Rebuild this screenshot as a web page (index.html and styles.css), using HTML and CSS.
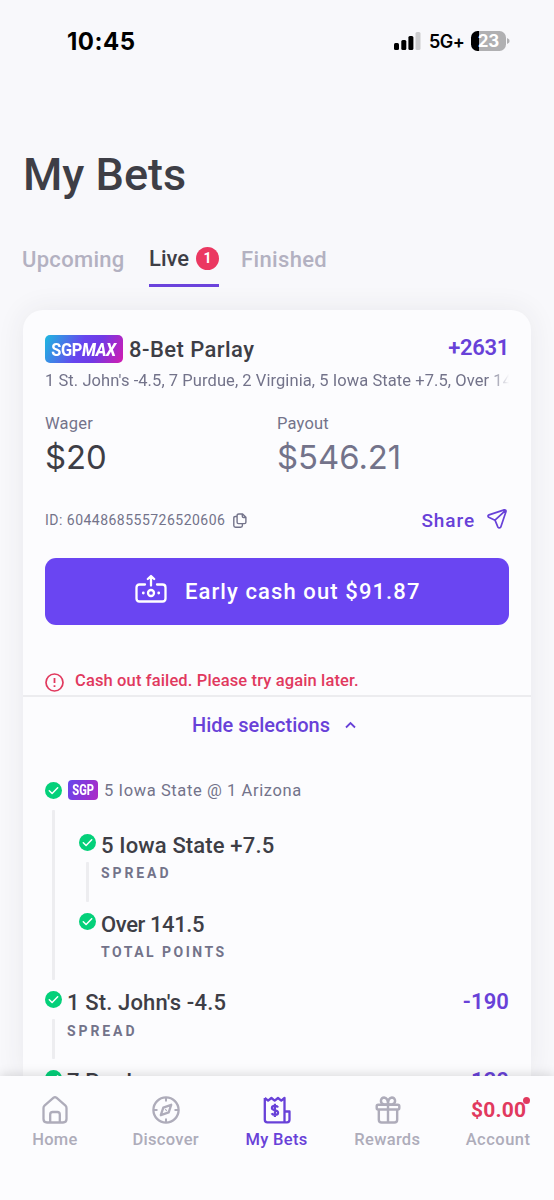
FILE: index.html
```html
<!DOCTYPE html>
<html lang="en">
<head>
<meta charset="utf-8">
<title>My Bets</title>
<link rel="stylesheet" href="styles.css">
</head>
<body>
<svg width="0" height="0" class="defs">
  <symbol id="check" viewBox="0 0 17 17"><circle cx="8.5" cy="8.5" r="8.5" fill="#04d07a"/><path d="M4.3 8.8l2.8 2.7 5.6-5.7" fill="none" stroke="#fff" stroke-width="1.5" stroke-linecap="round" stroke-linejoin="round"/></symbol>
</svg>
<div class="screen">
  <header class="status">
    <span class="clock">10:45</span>
    <span class="status-right">
      <svg class="signal" width="27" height="18" viewBox="0 0 27 18"><rect x="0" y="11" width="5" height="7" rx="1.5"/><rect x="7.3" y="8" width="5" height="10" rx="1.5"/><rect x="14.4" y="4" width="5" height="14" rx="1.5"/><rect x="21.5" y="0" width="5" height="18" rx="1.5" fill="#ccccce"/></svg>
      <span class="network">5G+</span>
      <span class="battery"><span class="level">23</span></span>
      <svg width="3" height="6" viewBox="0 0 3 6"><path d="M0 0Q2.6 1 2.6 3T0 6Z" fill="#b0b0b2"/></svg>
    </span>
  </header>

  <h1 class="title">My Bets</h1>

  <nav class="tabs">
    <span class="tab upcoming">Upcoming</span>
    <span class="tab active"><span class="live">Live</span><span class="count">1</span></span>
    <span class="tab finished">Finished</span>
  </nav>

  <main class="card">
    <section class="summary">
      <div class="head">
        <span class="tag-max"><span>SGP<i>MAX</i></span></span>
        <span class="bet-name">8-Bet Parlay</span>
        <span class="odds">+2631</span>
      </div>
      <div class="legs">1 St. John's -4.5, 7 Purdue, 2 Virginia, 5 Iowa State +7.5, Over 141.5</div>
      <div class="money">
        <div><div class="label">Wager</div><div class="amount">$20</div></div>
        <div class="muted"><div class="label">Payout</div><div class="amount">$546.21</div></div>
      </div>
      <div class="meta">
        <span class="bet-id">ID: 6044868555726520606</span>
        <svg class="copy" width="14" height="15" viewBox="0 0 14 15" fill="none" stroke="#73738a" stroke-width="1.4" stroke-linejoin="round"><path d="M5.8 1h3.8l3.3 3.2v5q0 1.4-1.4 1.4H5.5q-1.4 0-1.4-1.4V2.5Q4.100 1 5.800 1ZM9.300 1v2.200q0 1.300 1.300 1.300h2.300M4 3.500H2.200Q.800 3.500.800 4.900v7.600q0 1.700 1.700 1.700h5.200q1.700 0 1.700-1.700v-1.700"/></svg>
        <span class="share">Share</span>
        <svg class="plane" width="20" height="20" viewBox="0 0 20 20" fill="none" stroke="#6841d8" stroke-width="1.700" stroke-linejoin="round" stroke-linecap="round"><path d="M17.200.900 2 5.900Q.100 6.700 1.700 8.300L8 11.200l2.800 6.700q1.500 2.100 3 0l5.200-15.500Q19.200.600 17.200.900ZM8 11.200 18.600 1.300"/></svg>
      </div>
      <button class="cash">
        <svg width="32" height="30" viewBox="0 0 32 30" fill="none" stroke="#fff" stroke-width="2.300" stroke-linecap="round" stroke-linejoin="round"><path d="M10 10.500H4.500Q1.500 10.500 1.500 13.500v11q0 3 3 3h23q3 0 3-3v-11q0-3-3-3H22M16 11.500V4M12.800 5 16 2l3.200 3"/><circle cx="16" cy="19" r="3"/><path d="M8.300 19h.01M23.700 19h.01" stroke-width="2.800"/></svg>
        <span>Early cash out $91.87</span>
      </button>
      <div class="error">
        <svg width="19" height="19" viewBox="0 0 19 19" fill="none" stroke="#e1395e"><circle cx="9.500" cy="9.500" r="8.500" stroke-width="1.700"/><path d="M9.500 5v5M9.500 12.300v1.700" stroke-width="1.800"/></svg>
        <span>Cash out failed. Please try again later.</span>
      </div>
    </section>
    <section class="selections">
      <div class="toggle"><span>Hide selections</span><svg width="11" height="8" viewBox="0 0 11 8" fill="none" stroke="#6841d8" stroke-width="1.800"><path d="M1 6.500 5.500 2l4.500 4.500"/></svg></div>
      <div class="game">
        <div class="rail"><svg class="check"><use href="#check"/></svg><i class="line"></i></div>
        <div class="game-body">
          <div class="match"><span class="tag"><span>SGP</span></span><span class="match-name">5 Iowa State @ 1 Arizona</span></div>
          <div class="pick nested">
            <div class="rail"><svg class="check"><use href="#check"/></svg><i class="line"></i></div>
            <div><div class="name">5 Iowa State +7.5</div><div class="market">SPREAD</div></div>
          </div>
          <div class="pick nested">
            <div class="rail"><svg class="check"><use href="#check"/></svg></div>
            <div><div class="name over">Over 141.5</div><div class="market total">TOTAL POINTS</div></div>
          </div>
        </div>
      </div>
      <div class="pick">
        <div class="rail"><svg class="check"><use href="#check"/></svg><i class="line"></i></div>
        <div><div class="name">1 St. John's -4.5</div><div class="market">SPREAD</div></div>
        <span class="price">-190</span>
      </div>
      <div class="pick">
        <div class="rail"><svg class="check"><use href="#check"/></svg></div>
        <div><div class="name">7 Purdue</div></div>
        <span class="price last">120</span>
      </div>
    </section>
  </main>

  <nav class="bottom">
    <a class="item home"><svg width="26" height="28" viewBox="0 0 26 28" fill="none" stroke="currentColor" stroke-width="2.300" stroke-linejoin="round"><path d="M11.600 1.700 2.500 9.600Q1.500 10.500 1.500 12v11q0 3.500 3.500 3.500h16q3.500 0 3.500-3.500V12q0-1.500-1-2.400l-9.100-7.900q-1.400-1-2.800 0ZM8.200 26V18.500Q8.200 16 10.700 16h4.600q2.500 0 2.500 2.500V26"/></svg><span>Home</span></a>
    <a class="item discover"><svg width="28" height="28" viewBox="0 0 28 28" fill="none" stroke="currentColor" stroke-width="2.300" stroke-linejoin="round"><circle cx="14" cy="14" r="12.600"/><path d="M14 1.500v4M14 22.500v4M1.500 14h4M22.500 14h4" stroke-width="2"/><path d="m19.200 8.800-2.500 7.600-7.900 2.800 2.500-7.600ZM13.600 14.400l.8-.8"/></svg><span>Discover</span></a>
    <a class="item bets"><svg width="28" height="28" viewBox="0 0 28 28" fill="none" stroke="currentColor" stroke-width="2.300" stroke-linejoin="round"><path d="M1.800 2V23.700q0 2.600 2.600 2.600H24q2.500 0 2.500-2.500V15.500h-5M21.500 26V2L18.300 4.600 15 2 11.700 4.600 8.400 2 5.100 4.600 1.800 2"/><path d="M15 11.500q-.700-1.700-3.200-1.700-2.900 0-2.900 2.200c0 3.200 6.200 1.600 6.200 4.700q0 2.200-3.200 2.200-2.500 0-3.300-1.600M11.900 7.800v13.200" stroke-width="2.200"/></svg><span>My Bets</span></a>
    <a class="item rewards"><svg width="26" height="29" viewBox="0 0 26 29" fill="none" stroke="currentColor" stroke-width="2.500" stroke-linejoin="round"><rect x="1.300" y="9" width="23.400" height="5" rx="1.500"/><path d="M3.500 14v10.500q0 3 3 3h13q3 0 3-3V14M13 9v18.500M13 8.700H8.500Q5.300 7.500 5.700 4.500 6.300 1.500 9 1.500q4 .3 4 7.200Zm0 0h4.500q3.200-1.200 2.800-4.200-.6-3-3.300-3-4 .3-4 7.200Z"/></svg><span>Rewards</span></a>
    <a class="item account"><b class="balance">$0.00<i class="dot"></i></b><span>Account</span></a>
  </nav>
</div>
</body>
</html>
```
FILE: styles.css
```css
* { box-sizing: border-box; }
body { margin: 0; background: #f8f8fb; font-family: Roboto, "Liberation Sans", sans-serif; color: #3e3e46; }
svg { display: block; flex: none; }
.defs { position: absolute; }
.screen { width: 554px; height: 1200px; overflow: hidden; display: flex; flex-direction: column; white-space: nowrap; }

.status { height: 84px; flex: none; padding: 0 44px 2px 67px; display: flex; align-items: center; justify-content: space-between; color: #000; }
.clock { font: 700 24px Inter, sans-serif; letter-spacing: .5px; }
.status-right { display: flex; align-items: center; }
.network { font: 600 18px Inter, sans-serif; margin-left: 8px; width: 42px; letter-spacing: -.5px; }
.battery { width: 35px; height: 20px; border-radius: 6.500px; background: linear-gradient(90deg, #000 8px, #b0b0b2 8px); display: flex; align-items: center; justify-content: center; margin-right: 1px; }
.level { font: 700 17px Inter, sans-serif; color: #fff; }

.title { margin: 61px 0 0 23px; font-size: 45px; line-height: 60px; font-weight: 500; letter-spacing: 0; flex: none; }
.tabs { display: flex; margin: 27px 0 0 22px; height: 55px; flex: none; font-size: 22px; font-weight: 500; line-height: 56px; color: #b3b1c1; }
.upcoming { width: 127px; letter-spacing: .3px; }
.active { display: flex; align-items: center; width: 70px; border-bottom: 3px solid #6b43dc; color: #3e3e46; }
.active .live { width: 47px; padding-top: 2px; }
.finished { margin-left: 22px; letter-spacing: .35px; }
.count { width: 23px; height: 23px; border-radius: 50%; background: #eb3861; color: #fff; font-size: 14px; line-height: 23px; font-weight: 700; text-align: center; }

.card { margin: 23px 23px 0; flex: 1; min-height: 0; overflow: hidden; background: #fcfcfe; border-radius: 20px 20px 0 0; box-shadow: 0 0 28px rgba(50, 50, 70, .08); }
.summary { height: 387px; padding: 22px 22px 0; border-bottom: 2px solid #ececef; }
.head { display: flex; height: 34px; align-items: center; font-size: 22px; font-weight: 500; }
.tag-max { width: 78px; height: 28px; border-radius: 5px; background: linear-gradient(115deg, #20b4e0 2%, #6645ef 45%, #7139e5 65%, #d41bb0 100%); color: #fff; font-size: 19px; line-height: 29px; font-weight: 700; display: flex; justify-content: center; margin-right: 6px; letter-spacing: -.4px; }
.tag-max span { transform: scaleX(.86); }
.tag-max i { font-weight: 800; }
.bet-name { letter-spacing: .45px; }
.odds { margin-left: auto; margin-top: -3px; color: #6841d8; font-weight: 600; letter-spacing: -.3px; }
.legs { margin-top: 2px; height: 26px; line-height: 26px; font-size: 16.500px; letter-spacing: .07px; color: #73738a; overflow: hidden; -webkit-mask: linear-gradient(90deg, #000 445px, transparent 464px); mask: linear-gradient(90deg, #000 445px, transparent 464px); }
.money { display: grid; grid-template-columns: 232px 1fr; margin-top: 16px; }
.label { font-size: 16.500px; line-height: 27px; color: #73738a; letter-spacing: .2px; }
.amount { font: 400 32.800px/40px Inter, sans-serif; }
.muted { color: #73738a; }
.meta { display: flex; align-items: center; height: 26px; margin-top: 30px; color: #73738a; font-size: 14px; }
.bet-id { letter-spacing: .48px; }
.copy { margin-left: 8px; }
.share { margin-left: auto; margin-right: 12px; font-size: 19px; font-weight: 500; letter-spacing: .9px; color: #6841d8; }
.plane { margin-right: 2px; margin-top: -2px; }
.cash { display: flex; align-items: center; gap: 18px; width: 464px; height: 67px; margin-top: 25px; padding: 0 0 0 90px; border: 0; border-radius: 11px; background: #6a45f2; color: #fff; font: 500 22px Roboto, sans-serif; letter-spacing: 1.100px; }
.cash svg { margin-top: -5px; }
.error { display: flex; align-items: center; gap: 11px; margin-top: 42px; height: 26px; color: #e1395e; font-size: 16.500px; font-weight: 500; letter-spacing: .13px; }
.error svg { margin-top: 4px; }

.selections { padding: 12px 22px 0; }
.toggle { display: flex; align-items: center; height: 32px; padding-left: 147px; gap: 15px; color: #6841d8; font-size: 20px; font-weight: 500; }
.game { display: flex; height: 209px; margin-top: 41px; }
.rail { display: flex; flex-direction: column; align-items: center; width: 17px; flex: none; }
.check { width: 17px; height: 17px; }
.line { flex: 1; width: 3px; margin: 11px 0; background: #ededf0; border-radius: 1px; }
.game-body { padding-left: 6px; }
.match { display: flex; align-items: center; height: 16px; font-size: 16.500px; letter-spacing: .6px; color: #73738a; }
.tag { width: 30px; height: 20px; margin-right: 6px; border-radius: 4px; background: linear-gradient(110deg, #6447ed, #ae28c5); color: #fff; font-size: 14.500px; line-height: 21px; font-weight: 800; letter-spacing: 0; display: flex; justify-content: center; }
.tag span { transform: scaleX(.77); }
.pick { display: flex; height: 79px; gap: 5px; }
.pick.nested { margin-left: 11px; }
.match + .nested { margin-top: 36px; }
.name { font-size: 22px; line-height: 24px; font-weight: 500; letter-spacing: .15px; }
.over { letter-spacing: -.4px; }
.market { margin-top: 7px; font-size: 14px; line-height: 18px; font-weight: 700; letter-spacing: 2.900px; color: #73738a; }
.nested .market { margin-top: 6px; }
.market.total { letter-spacing: 2.500px; }
.price { margin-left: auto; margin-top: -2px; line-height: 26px; font-size: 22px; font-weight: 600; letter-spacing: .1px; color: #6841d8; }
.price.last::before { content: "-"; }

.bottom { position: relative; flex: none; height: 124px; display: grid; grid-template-columns: repeat(5, 1fr); background: #fcfcfe; box-shadow: 0 -2px 10px rgba(0, 0, 0, .13); }
.item { display: flex; flex-direction: column; align-items: center; padding-top: 20px; color: #aeacba; font-size: 16.500px; line-height: 22px; font-weight: 500; letter-spacing: .3px; }
.item svg { height: 28px; }
.item > span { margin-top: 5px; margin-right: 1px; }
.bets { color: #6841d8; }
.account { letter-spacing: .5px; }
.balance { position: relative; height: 28px; line-height: 28px; font-size: 21px; letter-spacing: .2px; color: #e1395e; }
.dot { position: absolute; right: -4px; top: 1px; width: 7px; height: 7px; border-radius: 50%; background: #e1395e; }
```
